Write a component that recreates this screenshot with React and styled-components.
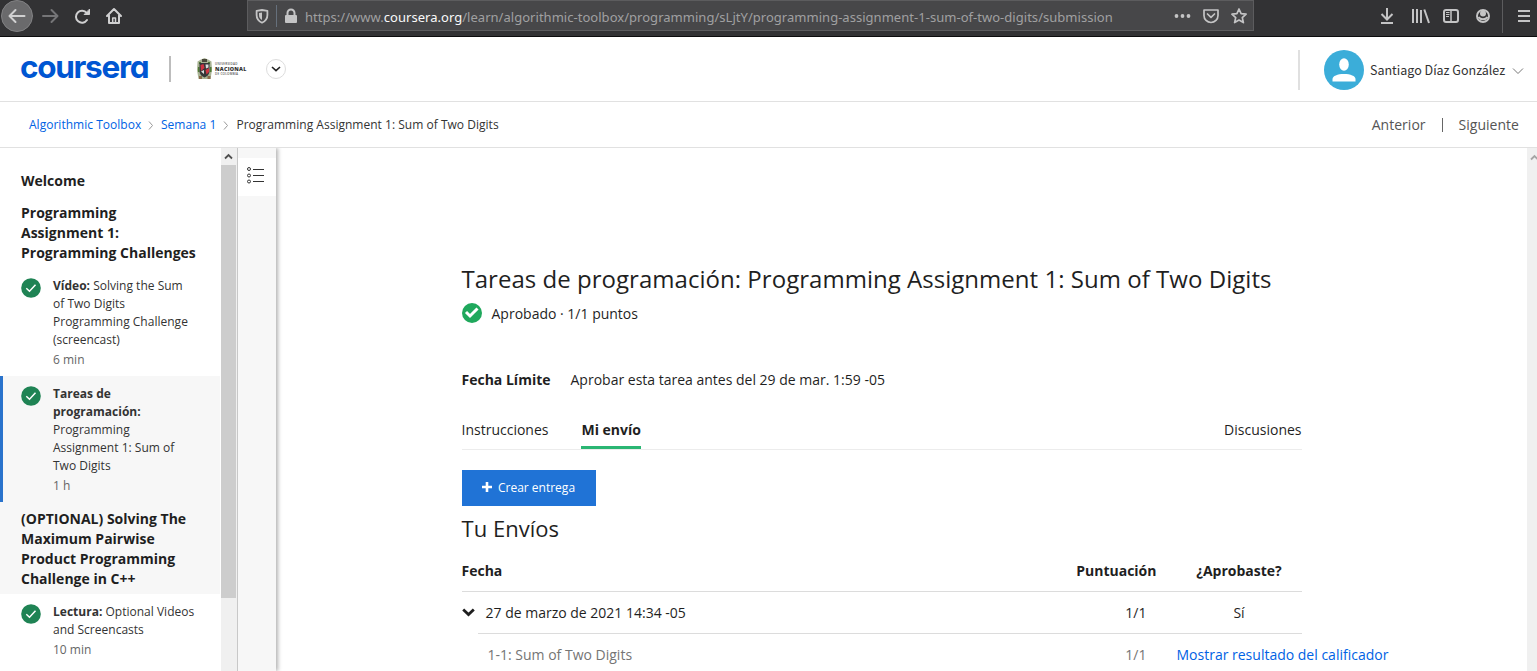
import React from 'react';
import styled, { createGlobalStyle } from 'styled-components';

const Global = createGlobalStyle`
  *{box-sizing:border-box}
  body{margin:0;background:#fff;font-family:"Open Sans","Noto Sans",sans-serif;font-size:14px;line-height:20px;color:#1f1f1f;overflow:hidden}
  svg{display:block;flex:none}
`;
const Page = styled.div`width:1537px;height:671px;display:flex;flex-direction:column;overflow:hidden;`;

const Browser = styled.div`height:37px;flex:none;background:#323234;border-bottom:1px solid #0c0c0d;display:flex;align-items:flex-start;color:#c4c4c5;`;
const NavIcons = styled.div`width:247px;display:flex;`;
const UrlBar = styled.div`width:1007px;height:31px;background:#474749;border:1px solid #5c5c5e;display:flex;`;
const Url = styled.div`flex:1;white-space:nowrap;font-family:"Noto Sans","Open Sans",sans-serif;font-size:13px;line-height:32px;color:#a0a0a1;letter-spacing:0.03px;padding-left:4px;b{font-weight:400;color:#f9f9fa}`;
const Tools = styled.div`flex:1;display:flex;justify-content:flex-end;`;

const Header = styled.header`height:65px;flex:none;border-bottom:1px solid #e1e1e1;display:flex;align-items:center;padding:0 13px 0 20px;`;
const Logo = styled.div`width:129px;height:40px;font-family:Inter,sans-serif;font-weight:700;font-size:31.5px;line-height:35px;color:#0056d2;font-feature-settings:"cv11";letter-spacing:-1.3px;`;
const Divider = styled.div`width:2px;height:${p => p.$h}px;background:${p => p.$c};margin-left:${p => p.$ml || 0}px;margin-right:${p => p.$mr || 0}px;`;
const School = styled.div`display:flex;align-items:center;margin-left:25px;width:52px;gap:2px;`;
const SchoolName = styled.div`font-family:"Open Sans",sans-serif;color:#555;white-space:nowrap;font-size:3px;font-weight:600;line-height:4px;letter-spacing:.25px;b{display:block;font-size:5.4px;line-height:6px;color:#333;letter-spacing:.25px}`;
const RoundButton = styled.button`width:20px;height:20px;border:1px solid #ddd;border-radius:50%;background:#fff;padding:0;display:flex;align-items:center;justify-content:center;margin-left:18px;`;
const Account = styled.div`margin:1px 0 0 auto;padding-top:1px;display:flex;align-items:center;`;
const UserName = styled.div`font-family:"Noto Sans CJK SC",sans-serif;font-size:12.5px;white-space:nowrap;width:143px;padding-left:6px;color:#333;`;

const Crumbs = styled.nav`height:46px;flex:none;border-bottom:1px solid #e1e1e1;display:flex;align-items:center;padding:0 18px 0 29px;font-size:12px;letter-spacing:.02px;white-space:nowrap;`;
const Crumb = styled.span`color:${p => (p.$link ? '#0062e4' : '#333')};width:${p => (p.$w ? `${p.$w}px` : 'auto')};`;
const Pager = styled.div`margin-left:auto;display:flex;align-items:center;font-size:14px;color:#555;gap:16px;i{width:1px;height:14px;background:#666}`;

const Body = styled.div`flex:1;display:flex;min-height:0;`;
const Side = styled.aside`width:221px;padding-top:16px;overflow:hidden;flex:none;`;
const Heading = styled.h3`margin:0;width:220px;padding:7px 0 5px 21px;font-size:14px;line-height:20px;font-weight:700;white-space:pre;background:${p => (p.$shade ? '#f7f7f7' : '#fff')};`;
const Item = styled.div`width:220px;display:flex;gap:12px;padding:9px 0 7px 18px;border-left:3px solid ${p => (p.$active ? '#2a73cc' : 'transparent')};background:${p => (p.$active ? '#f7f7f7' : '#fff')};svg{margin-top:1px}`;
const ItemText = styled.div`font-size:12px;line-height:18px;white-space:pre;color:#333;letter-spacing:.01px;`;
const Line = styled.div`height:18px;font-weight:${p => (p.$bold ? 700 : 400)};`;
const Duration = styled.div`margin-top:2px;color:#666;`;
const Scroll = styled.div`width:16px;flex:none;background:#f0f0f0;`;
const ScrollUp = styled.div`height:17px;display:flex;align-items:center;padding-left:3px;`;
const Thumb = styled.div`width:15px;height:433px;background:#cdcdcd;`;
const Rail = styled.div`width:39px;flex:none;border-left:1px solid #c8c8c8;background:#f7f7f7;padding-top:10px;box-shadow:2px 0 4px rgba(0,0,0,.3);clip-path:inset(0 -10px 0 0);`;
const RailButton = styled.div`height:38px;background:#fff;padding:8px 0 0 9px;`;
const Main = styled.main`flex:1;padding:113px 0 0 185.5px;`;
const Content = styled.div`width:840px;`;
const Title = styled.h1`margin:0;font-size:24px;line-height:36px;font-weight:400;white-space:nowrap;letter-spacing:.03px;`;
const Status = styled.div`display:flex;height:20px;margin-top:6px;gap:10px;align-items:center;span{padding-top:2px}`;
const Deadline = styled.div`display:flex;gap:20px;margin-top:47px;height:20px;`;
const Tabs = styled.div`display:flex;margin-top:27px;height:33px;border-bottom:1px solid #ececec;`;
const Tab = styled.div`height:32px;padding-top:3px;white-space:nowrap;font-weight:${p => (p.$on ? 700 : 400)};border-bottom:${p => (p.$on ? '3px solid #2ab673' : '0')};margin-left:${p => p.$ml || 0};`;
const Create = styled.button`margin-top:20px;width:134px;height:36px;border:0;background:#2073d6;color:#fff;font:12px "Open Sans",sans-serif;display:flex;align-items:center;justify-content:center;gap:6px;padding:0 0 2px;`;
const Subtitle = styled.h2`margin:6px 0 0;font-size:22px;line-height:33px;font-weight:400;letter-spacing:.03px;`;
const Row = styled.div`display:grid;grid-template-columns:1fr 120px 125px;height:${p => p.$h}px;margin-left:${p => p.$ml || 0}px;padding-top:${p => p.$pt || 0}px;border-bottom:${p => (p.$plain ? '0' : '1px solid #dcdcdc')};align-items:center;font-weight:${p => (p.$bold ? 700 : 400)};color:${p => (p.$dim ? '#757575' : '#1f1f1f')};`;
const Cell = styled.div`display:flex;align-items:center;gap:${p => p.$gap || 0}px;padding-left:${p => p.$pl || 0}px;`;
const Score = styled.div`text-align:right;padding-right:${p => p.$pr}px;`;
const Passed = styled.div`text-align:center;white-space:nowrap;`;
const Link = styled.a`color:#0062e4;white-space:nowrap;`;
const Rule = styled.div`height:1px;margin-left:16px;background:#dcdcdc;`;
const PageScroll = styled.div`width:10px;background:#f0f0f0;flex:none;padding:6px 0 0 3px;overflow:hidden;`;

const Check = () => <svg width="20" height="20" viewBox="0 0 20 20"><circle cx="10" cy="10" r="9.8" fill="#1f8354" /><path d="M5.3 10.3 8.5 13.2 14.5 6.8" fill="none" stroke="#fff" strokeWidth="1.5" /></svg>;
const Sep = () => <svg width="20" height="12" viewBox="0 0 20 12"><path d="M8 2.500 11.500 6.500 8 10.500" fill="none" stroke="#999" /></svg>;

export default function App() {
  return (
    <Page>
      <Global />
      <Browser>
        <NavIcons>
          <svg width="130" height="36" viewBox="0 0 130 36" fill="none" stroke="#d0d0d1" strokeWidth="2" strokeLinecap="round" strokeLinejoin="round">
            <circle cx="17" cy="16" r="15.5" fill="#6a6a6c" stroke="#818183" strokeWidth="1" />
            <path d="M24.500 16H10M15.500 10 9.500 16l6 6" />
            <path stroke="#757577" d="M43 16h14M51.500 10l6 6-6 6" />
            <path d="M87 20a6 6 0 1 1-.3-7" /><path fill="#d0d0d1" strokeWidth="1" d="M84.500 14.500h5v-5z" />
            <path d="M107 16l7-7 7 7M109 15.500V23h10v-7.500" /><path strokeWidth="1.500" d="M112.700 23v-5h2.800v5" />
          </svg>
        </NavIcons>
        <UrlBar>
          <svg width="53" height="30" viewBox="0 0 53 30" fill="none" stroke="#c4c4c5" strokeWidth="1.800">
            <path d="M14 9 19.400 9.800v4.200c0 3.600-2 6.200-5.400 7.700C10.600 20.200 8.600 17.600 8.600 14V9.800z" strokeLinejoin="round" /><path fill="#c4c4c5" stroke="none" d="M14 11.500v7.500c-2.300-1.200-3-3-3-5v-2z" />
            <path stroke="#66707c" strokeWidth="1" d="M28.500 4v22" />
            <rect x="37" y="14" width="12" height="8" rx="1" fill="#c4c4c5" stroke="none" /><path strokeWidth="2" d="M39.500 14v-2a3.500 3.500 0 0 1 7 0v2" />
          </svg>
          <Url>https://www.<b>coursera.org</b>/learn/algorithmic-toolbox/programming/sLjtY/programming-assignment-1-sum-of-two-digits/submission</Url>
          <svg width="85" height="30" viewBox="0 0 85 30" fill="none" stroke="#c4c4c5" strokeWidth="1.700" strokeLinejoin="round" strokeLinecap="round">
            <g fill="#c4c4c5" stroke="none"><circle cx="8.500" cy="15" r="1.900" /><circle cx="14.500" cy="15" r="1.900" /><circle cx="20.500" cy="15" r="1.900" /></g>
            <path d="M36 9h14v5.500a7 7 0 0 1-14 0zM39.500 13l3.500 3.300 3.500-3.300" />
            <path d="m71 8 2.100 4.700 5 .5-3.800 3.400 1.100 5-4.400-2.600-4.400 2.600 1.100-5-3.800-3.400 5-.5z" />
          </svg>
        </UrlBar>
        <Tools>
          <svg width="167" height="33" viewBox="0 0 167 33" fill="none" stroke="#c4c4c5" strokeWidth="2">
            <path d="M17 8v11M11.500 14l5.500 5.500 5.500-5.500M11 23h12" />
            <path d="M43 9v14M47 9v14M51 10v13M54.300 9.500l4.700 13.500" />
            <rect x="74" y="10" width="14" height="12" rx="2" /><path strokeWidth="1.500" d="M81 10v12" /><path strokeWidth="1" d="M76 12.500h3.500M76 14.500h3.500M76 16.500h3" />
            <circle cx="113" cy="16" r="6" /><circle cx="113" cy="13.500" r="3" fill="#c4c4c5" stroke="none" /><path d="M108.500 17c2 3 7 3 9 0" />
            <path stroke="#5c5c5e" strokeWidth="1" d="M132.500 0v33" />
            <path d="M148 11h12M148 16h12M148 21h12" />
          </svg>
        </Tools>
      </Browser>
      <Header>
        <Logo>coursera</Logo>
        <Divider $h={26} $c="#bdbdbd" $ml={20} />
        <School>
          <svg width="17" height="22" viewBox="0 0 17 22">
            <path d="M5 1.500 8.500 0 12 1.500l3.500 2L16 12l-1.500 9h-12L1 12l.5-8.500z" fill="#a9b394" />
            <path d="M3 4h2v2H3zM12 4h2v2h-2zM2 9h1.500v5H2zM14 9h1.500v5H14z" fill="#4f7a35" />
            <path d="M6 1h5v3H6z" fill="#4b4a3c" />
            <path d="M3.500 5h10v9q-1 4-5 5.500-4-1.500-5-5.500z" fill="#353638" />
            <path d="M4.500 7l3-1 1 4-3.500 3zM9.500 12l3.500-2v4l-2.500 2.500z" fill="#cf3342" />
            <path d="M9.500 6.500h3v3l-2.500 1zM5 13.500l3-1.500v4z" fill="#dcdcdc" />
            <path d="M3 18h3v3H3zM11.500 18h3v3h-3z" fill="#8a6a4a" />
          </svg>
          <SchoolName>UNIVERSIDAD<b>NACIONAL</b>DE COLOMBIA</SchoolName>
        </School>
        <RoundButton><svg width="10" height="8" viewBox="0 0 10 8"><path d="M1 2l4 3.700L9 2" fill="none" stroke="#222" strokeWidth="1.600" /></svg></RoundButton>
        <Account>
          <Divider $h={40} $c="#e0e0e0" $mr={24} />
          <svg width="40" height="40" viewBox="0 0 40 40"><circle cx="20" cy="20" r="20" fill="#3badd9" /><ellipse cx="20" cy="14.500" rx="4.800" ry="6.200" fill="#fff" /><path d="M8.500 31.500v-2.500c0-3 5-5 11.500-5s11.500 2 11.500 5v2.500z" fill="#fff" /></svg>
          <UserName>Santiago Díaz González</UserName>
          <svg width="17" height="12" viewBox="0 0 17 12"><path d="M6 4.500l5 5 5-5" fill="none" stroke="#777" /></svg>
        </Account>
      </Header>
      <Crumbs>
        <Crumb $link $w={112}>Algorithmic Toolbox</Crumb><Sep /><Crumb $link $w={55.4}>Semana 1</Crumb><Sep /><Crumb>Programming Assignment 1: Sum of Two Digits</Crumb>
        <Pager><span>Anterior</span><i /><span>Siguiente</span></Pager>
      </Crumbs>
      <Body>
        <Side>
          <Heading>Welcome</Heading>
          <Heading>{'Programming\nAssignment 1:\nProgramming Challenges'}</Heading>
          <Item><Check /><ItemText><Line><b>Vídeo:</b> Solving the Sum</Line><Line>of Two Digits</Line><Line>Programming Challenge</Line><Line>(screencast)</Line><Duration>6 min</Duration></ItemText></Item>
          <Item $active><Check /><ItemText><Line $bold>Tareas de</Line><Line $bold>programación:</Line><Line>Programming</Line><Line>Assignment 1: Sum of</Line><Line>Two Digits</Line><Duration>1 h</Duration></ItemText></Item>
          <Heading $shade>{'(OPTIONAL) Solving The\nMaximum Pairwise\nProduct Programming\nChallenge in C++'}</Heading>
          <Item><Check /><ItemText><Line><b>Lectura:</b> Optional Videos</Line><Line>and Screencasts</Line><Duration>10 min</Duration></ItemText></Item>
        </Side>
        <Scroll>
          <ScrollUp><svg width="9" height="7" viewBox="0 0 9 7"><path d="M1 5.500 4.500 2 8 5.500" fill="none" stroke="#505050" strokeWidth="1.800" /></svg></ScrollUp>
          <Thumb />
        </Scroll>
        <Rail><RailButton>
          <svg width="18" height="20" viewBox="0 0 18 20" fill="none" stroke="#333" strokeWidth="1"><circle cx="2" cy="3" r="1.500" /><circle cx="2" cy="9.500" r="1.500" /><circle cx="2" cy="15.500" r="1.500" /><path d="M6 3.500h11M6 9.500h11M6 15.500h11" /></svg>
        </RailButton></Rail>
        <Main>
          <Content>
            <Title>Tareas de programación: Programming Assignment 1: Sum of Two Digits</Title>
            <Status><svg width="20" height="20" viewBox="0 0 20 20"><circle cx="10" cy="10" r="10" fill="#1fa85c" /><path d="M4 9 8 13 15.500 5.500" fill="none" stroke="#fff" strokeWidth="3" /></svg><span>Aprobado · 1/1 puntos</span></Status>
            <Deadline><b>Fecha Límite</b><span>Aprobar esta tarea antes del 29 de mar. 1:59 -05</span></Deadline>
            <Tabs><Tab>Instrucciones</Tab><Tab $on $ml="33px">Mi envío</Tab><Tab $ml="auto">Discusiones</Tab></Tabs>
            <Create><svg width="10" height="13" viewBox="0 0 10 13"><path d="M5 1v10M0 6h10" stroke="#fff" strokeWidth="2.600" /></svg>Crear entrega</Create>
            <Subtitle>Tu Envíos</Subtitle>
            <Row $h={47} $pt={6} $bold><Cell>Fecha</Cell><Score $pr={20}>Puntuación</Score><Passed>¿Aprobaste?</Passed></Row>
            <Row $h={41} $plain><Cell $gap={11}><svg width="13" height="9" viewBox="0 0 13 9"><path d="M1.200 1.500 6.500 6.500 11.800 1.500" fill="none" stroke="#1f1f1f" strokeWidth="2.800" /></svg>27 de marzo de 2021 14:34 -05</Cell><Score $pr={30}>1/1</Score><Passed>Sí</Passed></Row>
            <Rule />
            <Row $h={43} $dim><Cell $pl={26}>1-1: Sum of Two Digits</Cell><Score $pr={30}>1/1</Score><Link>Mostrar resultado del calificador</Link></Row>
          </Content>
        </Main>
        <PageScroll><svg width="9" height="7" viewBox="0 0 9 7"><path d="M1 5.500 4.500 2 8 5.500" fill="none" stroke="#a5a5a5" strokeWidth="1.800" /></svg></PageScroll>
      </Body>
    </Page>
  );
}
